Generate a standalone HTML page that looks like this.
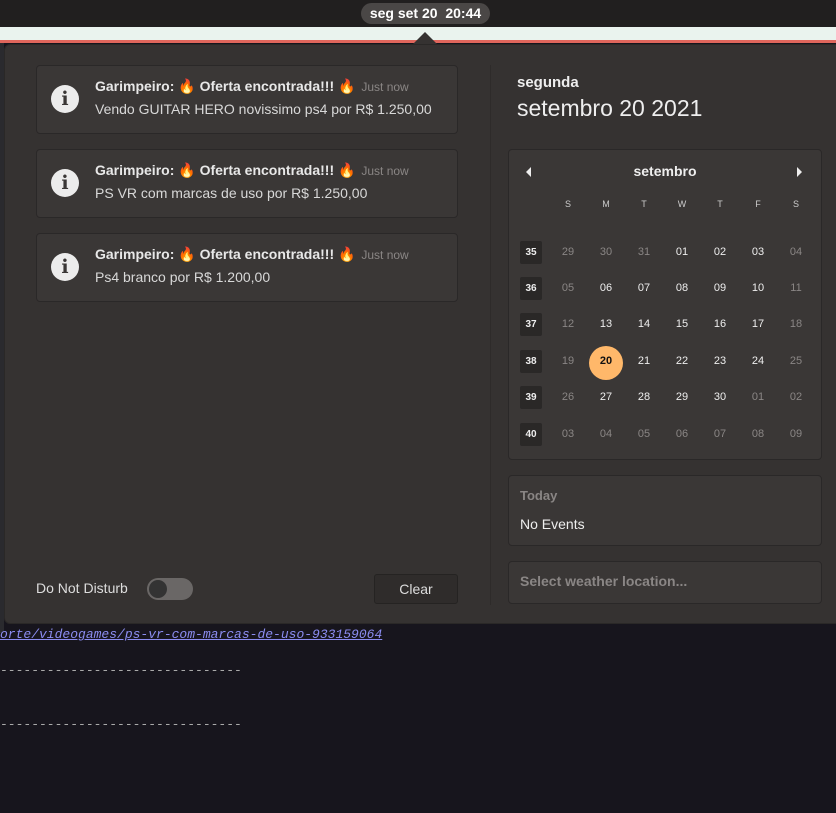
<!DOCTYPE html><html><head><meta charset="utf-8"><style>
*{margin:0;padding:0;box-sizing:border-box}
body{width:836px;height:813px;background:#17151d;position:relative;overflow:hidden;font-family:"Liberation Sans","DejaVu Sans",sans-serif;color:#eee}
.a{position:absolute}
.card{position:absolute;background:#3a3736;border:1px solid #2a2828;border-radius:4px}
.cal div{position:absolute;width:38px;text-align:center;font-size:11px;color:#eee}
.dim{color:#8a8685!important}
.wk{width:22px!important;height:23px;background:#2a2827;border-radius:2px;font-weight:bold;font-size:10px!important;line-height:23px;color:#fff}
</style></head><body>
<div class="a" style="left:0;top:0;width:836px;height:27px;background:#211f1f"></div>
<div class="a" style="left:361px;top:3px;width:129px;height:21px;border-radius:11px;background:#4a4746;color:#fff;font-weight:bold;font-size:14px;line-height:21px;text-align:center">seg set 20&nbsp; 20:44</div>
<div class="a" style="left:0;top:27px;width:836px;height:14px;background:#eaf3ee"></div>
<div class="a" style="left:0;top:40px;width:836px;height:3px;background:#e0665c"></div>
<div class="a" style="left:0;top:43px;width:4px;height:590px;background:#2a2a2e"></div>
<div class="a" style="left:4px;top:44px;width:840px;height:580px;background:#353231;border-radius:6px;border:1px solid #2a2827"></div>
<div class="a" style="left:413px;top:32px;width:0;height:0;border-left:12px solid transparent;border-right:12px solid transparent;border-bottom:12px solid #353231"></div>
<div class="a" style="left:490px;top:65px;width:1px;height:540px;background:#2e2b2a"></div>

<div class="card" style="left:36px;top:65px;width:422px;height:69px"></div>
<div class="card" style="left:36px;top:149px;width:422px;height:69px"></div>
<div class="card" style="left:36px;top:233px;width:422px;height:69px"></div>
<div id="n"></div>
<script>
const msgs=["Vendo GUITAR HERO novissimo ps4 por R$ 1.250,00","PS VR com marcas de uso por R$ 1.250,00","Ps4 branco por R$ 1.200,00"];
let h="";msgs.forEach((m,i)=>{const y=65+84*i;
h+=`<div class="a" style="left:51px;top:${y+20}px;width:28px;height:28px;border-radius:50%;background:#ececec;color:#3a3736;font:bold 19px/28px 'DejaVu Serif',serif;text-align:center">i</div>
<div class="a" style="left:95px;top:${y+13}px;font-size:14px;font-weight:bold;color:#e8e8e8;white-space:nowrap">Garimpeiro: 🔥 Oferta encontrada!!! 🔥 <span style="font-weight:normal;font-size:12px;color:#8a8685;margin-left:2px">Just now</span></div>
<div class="a" style="left:95px;top:${y+36}px;font-size:14px;color:#d8d8d8;white-space:nowrap">${m}</div>`});
document.getElementById("n").outerHTML=h;
</script>
<div class="a" style="left:36px;top:580px;font-size:14px;color:#ddd">Do Not Disturb</div>
<div class="a" style="left:147px;top:578px;width:46px;height:22px;border-radius:11px;background:#6a6766"></div>
<div class="a" style="left:149px;top:580px;width:18px;height:18px;border-radius:50%;background:#333"></div>
<div class="a" style="left:374px;top:574px;width:84px;height:30px;border-radius:3px;background:#2f2c2b;border:1px solid #252322;color:#ddd;font-size:14px;line-height:28px;text-align:center">Clear</div>

<div class="a" style="left:517px;top:74px;font-size:15px;font-weight:bold;color:#eee">segunda</div>
<div class="a" style="left:517px;top:95px;font-size:23px;color:#eee">setembro 20 2021</div>
<div class="card" style="left:508px;top:149px;width:314px;height:311px"></div>
<div class="a" style="left:508px;top:163px;width:314px;text-align:center;font-size:14px;font-weight:bold;color:#eee">setembro</div>
<div class="a" style="left:526px;top:167px;border-top:5px solid transparent;border-bottom:5px solid transparent;border-right:5px solid #eee"></div>
<div class="a" style="left:797px;top:167px;border-top:5px solid transparent;border-bottom:5px solid transparent;border-left:5px solid #eee"></div>
<div class="a" style="left:589px;top:346px;width:34px;height:34px;border-radius:50%;background:#ffb86a"></div>
<div class="cal" id="c"></div>
<script>
const xs=[568,606,644,682,720,758,796],ys=[252,288,324,361,397,434];
let c="";"SMTWTFS".split("").forEach((d,i)=>c+=`<div style="left:${xs[i]-19}px;top:199px;font-size:9px;color:#ccc">${d}</div>`);
const rows=[["29","30","31","01","02","03","04"],["05","06","07","08","09","10","11"],["12","13","14","15","16","17","18"],["19","20","21","22","23","24","25"],["26","27","28","29","30","01","02"],["03","04","05","06","07","08","09"]];
rows.forEach((r,ri)=>{const y=ys[ri];
c+=`<div class="wk" style="left:520px;top:${y-11}px">${35+ri}</div>`;
r.forEach((d,i)=>{let dim=(i==0||i==6||ri==0&&i<3||ri==4&&i>4||ri==5);
let st=(ri==3&&i==1)?"color:#111;font-weight:bold":"";
c+=`<div class="${dim?'dim':''}" style="left:${xs[i]-19}px;top:${y-6}px;${st}">${d}</div>`})});
document.getElementById("c").innerHTML=c;
</script>
<div class="card" style="left:508px;top:475px;width:314px;height:71px"></div>
<div class="a" style="left:520px;top:488px;font-size:13px;font-weight:bold;color:#8a8685">Today</div>
<div class="a" style="left:520px;top:516px;font-size:14px;color:#eee">No Events</div>
<div class="card" style="left:508px;top:561px;width:314px;height:43px"></div>
<div class="a" style="left:520px;top:573px;font-size:14px;font-weight:bold;color:#8a8685">Select weather location...</div>

<div class="a" style="left:0;top:627px;font:italic 13px 'Liberation Mono',monospace;color:#8b8cf0;text-decoration:underline">orte/videogames/ps-vr-com-marcas-de-uso-933159064</div>
<div class="a" style="left:0;top:663px;font:13px 'Liberation Mono',monospace;color:#aaa">-------------------------------</div>
<div class="a" style="left:0;top:717px;font:13px 'Liberation Mono',monospace;color:#aaa">-------------------------------</div>
</body></html>
